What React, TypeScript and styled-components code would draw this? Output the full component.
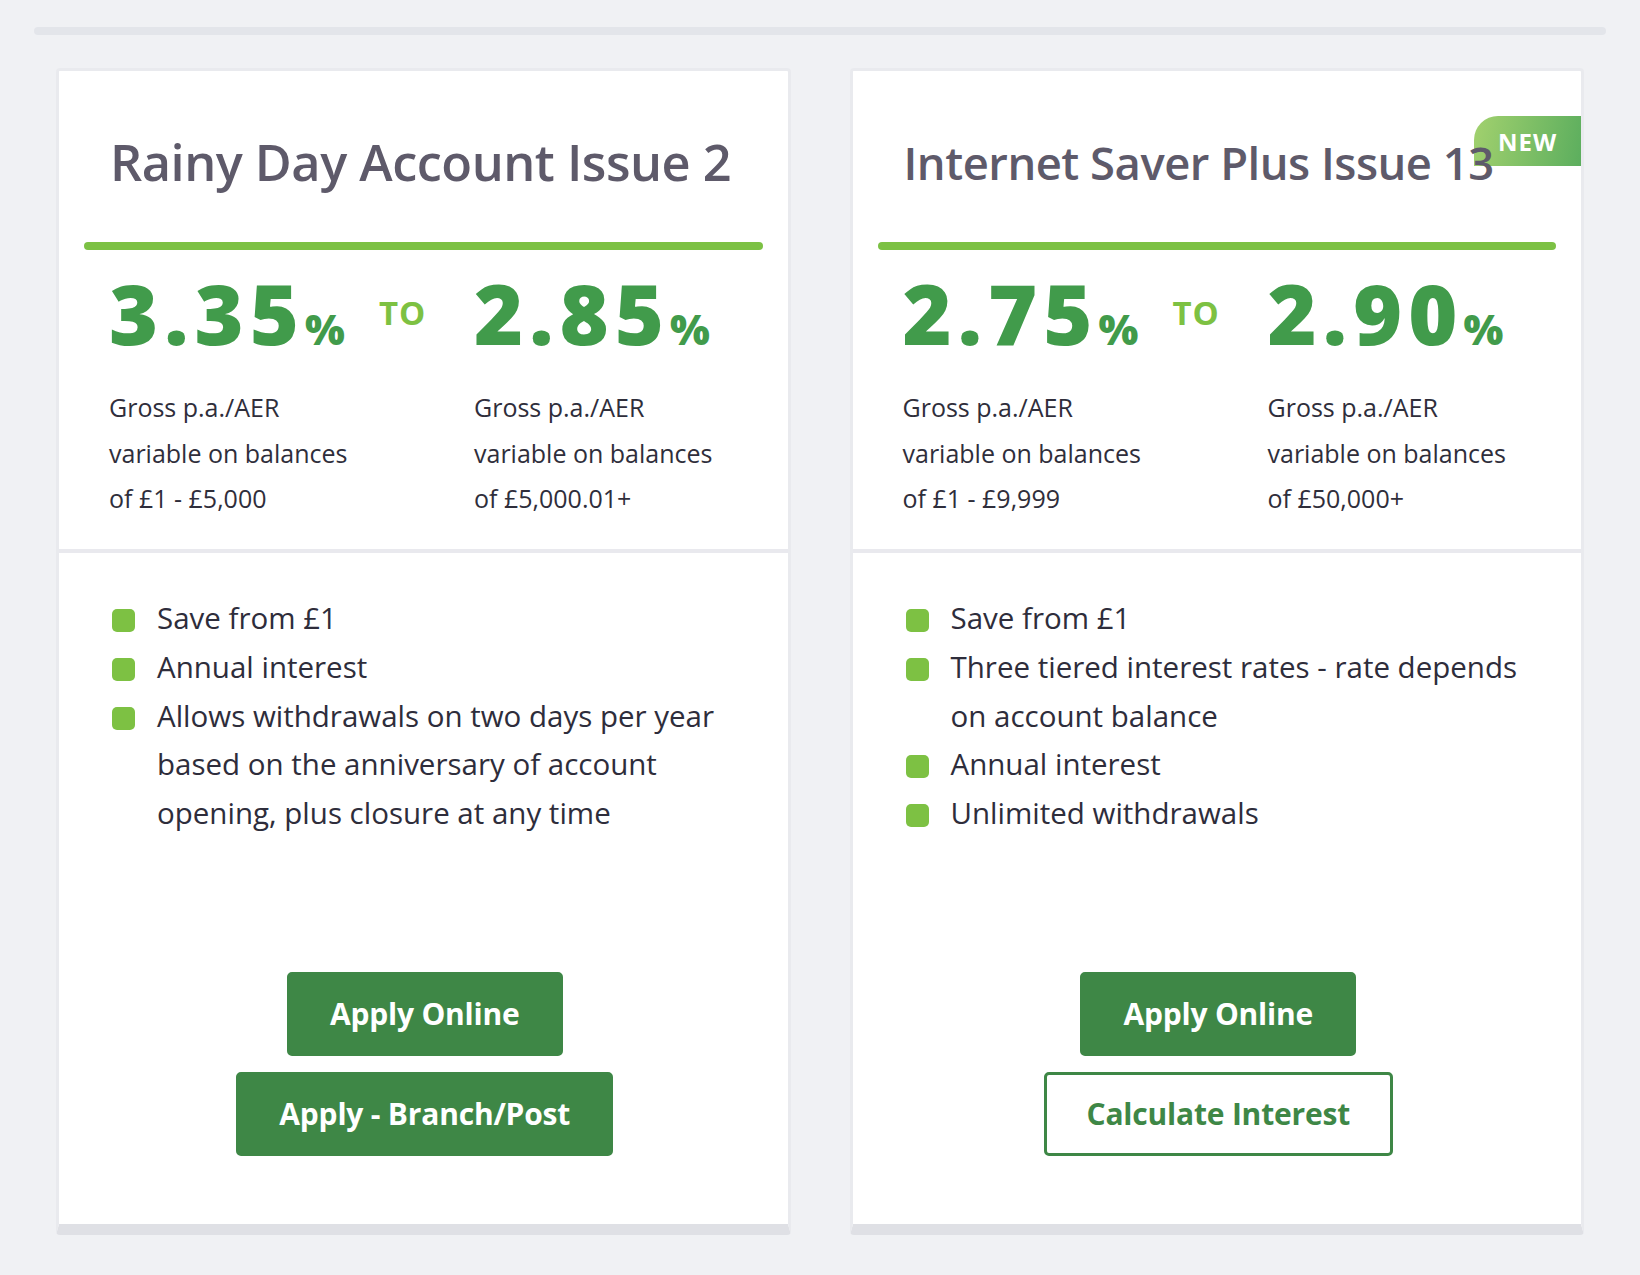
import * as React from "react";
import styled, { createGlobalStyle } from "styled-components";

interface Rate {
  value: string;
  note: string[];
}

interface Account {
  title: string;
  titleSize: number;
  isNew?: boolean;
  rates: [Rate, Rate];
  features: string[];
  actions: { label: string; outline?: boolean }[];
}

const accounts: Account[] = [
  {
    title: "Rainy Day Account Issue 2",
    titleSize: 50.5,
    rates: [
      { value: "3.35", note: ["Gross p.a./AER", "variable on balances", "of £1 - £5,000"] },
      { value: "2.85", note: ["Gross p.a./AER", "variable on balances", "of £5,000.01+"] },
    ],
    features: [
      "Save from £1",
      "Annual interest",
      "Allows withdrawals on two days per year based on the anniversary of account opening, plus closure at any time",
    ],
    actions: [{ label: "Apply Online" }, { label: "Apply - Branch/Post" }],
  },
  {
    title: "Internet Saver Plus Issue 13",
    titleSize: 45.4,
    isNew: true,
    rates: [
      { value: "2.75", note: ["Gross p.a./AER", "variable on balances", "of £1 - £9,999"] },
      { value: "2.90", note: ["Gross p.a./AER", "variable on balances", "of £50,000+"] },
    ],
    features: [
      "Save from £1",
      "Three tiered interest rates - rate depends on account balance",
      "Annual interest",
      "Unlimited withdrawals",
    ],
    actions: [{ label: "Apply Online" }, { label: "Calculate Interest", outline: true }],
  },
];

const GlobalStyle = createGlobalStyle`
  html, body {
    margin: 0;
    padding: 0;
    background: #f0f1f4;
  }
  body {
    font-family: "Open Sans", "Noto Sans", sans-serif;
    -webkit-font-smoothing: antialiased;
  }
`;

const Page = styled.div`
  padding: 27px 34px 40px;
  box-sizing: border-box;
  min-height: 1275px;
`;

const TopBar = styled.div`
  height: 8px;
  border-radius: 4px;
  background: #e3e5ea;
`;

const CardGrid = styled.div`
  display: grid;
  grid-template-columns: 1fr 1fr;
  gap: 59px;
  margin-top: 33px;
  padding: 0 22px;
`;

const Card = styled.section`
  position: relative;
  display: flex;
  flex-direction: column;
  background: #ffffff;
  border: 3px solid #e9eaee;
  border-bottom: 11px solid #dfe0e5;
  border-radius: 4px;
`;

const Badge = styled.div`
  position: absolute;
  top: 45px;
  right: 0;
  width: 107px;
  height: 50px;
  display: flex;
  align-items: center;
  justify-content: center;
  border-radius: 24px 0 0 0;
  background: linear-gradient(100deg, #a2d16e 0%, #5cae5e 100%);
  color: #ffffff;
  font-size: 24px;
  font-weight: 700;
  letter-spacing: 1px;
  z-index: 0;
`;

const TopSection = styled.div`
  padding: 0 25px 27px;
  border-bottom: 4px solid #e9e9ee;
`;

const Title = styled.h2<{ $size: number }>`
  position: relative;
  z-index: 1;
  height: 58px;
  margin: 0;
  padding: 62px 0 0 26px;
  font-size: ${(p) => p.$size}px;
  line-height: 58px;
  font-weight: 600;
  letter-spacing: -0.5px;
  color: #5e5a6a;
  white-space: nowrap;
`;

const GreenRule = styled.div`
  height: 8px;
  margin-top: 51px;
  border-radius: 4px;
  background: #7cc144;
`;

const RatesRow = styled.div`
  display: grid;
  grid-template-columns: 270px 95px 1fr;
  margin-top: 21px;
  padding-left: 25px;
`;

const RateColumn = styled.div`
  display: flex;
  flex-direction: column;
`;

const RateValue = styled.div`
  font-size: 84px;
  line-height: 84px;
  font-weight: 800;
  letter-spacing: 6px;
  color: #419b4b;
  white-space: nowrap;
`;

const Percent = styled.span`
  font-size: 42px;
  line-height: 42px;
  letter-spacing: 0;
`;

const ToLabel = styled.div`
  margin-top: 25px;
  font-size: 33px;
  line-height: 33px;
  font-weight: 700;
  letter-spacing: 1px;
  color: #7dc142;
`;

const RateNote = styled.p`
  margin: 30px 0 0;
  font-size: 25px;
  line-height: 45.5px;
  color: #2f2e3b;
`;

const BottomSection = styled.div`
  flex: 1;
  display: flex;
  flex-direction: column;
  padding: 41.5px 50px 68px 53px;
`;

const FeatureList = styled.ul`
  flex: 1;
  min-height: 377.5px;
  margin: 0;
  padding: 0;
  list-style: none;
`;

const FeatureItem = styled.li`
  display: flex;
  align-items: flex-start;
  gap: 22px;
  font-size: 29.5px;
  line-height: 48.75px;
  color: #2e2d3b;
`;

const Bullet = styled.span`
  flex: none;
  width: 23px;
  height: 23px;
  margin-top: 15px;
  border-radius: 5px;
  background: #7dc143;
`;

const ButtonGroup = styled.div`
  display: flex;
  flex-direction: column;
  align-items: center;
  gap: 16px;
`;

const Button = styled.a<{ $outline?: boolean }>`
  box-sizing: border-box;
  display: inline-flex;
  align-items: center;
  justify-content: center;
  height: 84px;
  padding: 0 40px;
  border-radius: 5px;
  border: 3px solid #3e8746;
  background: ${(p) => (p.$outline ? "#ffffff" : "#3e8746")};
  color: ${(p) => (p.$outline ? "#3e8746" : "#ffffff")};
  font-size: 30px;
  font-weight: 700;
  letter-spacing: -0.2px;
  text-decoration: none;
  white-space: nowrap;
  cursor: pointer;
`;

function RateBlock({ rate }: { rate: Rate }) {
  return (
    <RateColumn>
      <RateValue>
        {rate.value}
        <Percent>%</Percent>
      </RateValue>
      <RateNote>
        {rate.note.map((line, i) => (
          <React.Fragment key={i}>
            {line}
            {i < rate.note.length - 1 && <br />}
          </React.Fragment>
        ))}
      </RateNote>
    </RateColumn>
  );
}

function AccountCard({ account }: { account: Account }) {
  return (
    <Card>
      {account.isNew && <Badge>NEW</Badge>}
      <TopSection>
        <Title $size={account.titleSize}>{account.title}</Title>
        <GreenRule />
        <RatesRow>
          <RateBlock rate={account.rates[0]} />
          <ToLabel>TO</ToLabel>
          <RateBlock rate={account.rates[1]} />
        </RatesRow>
      </TopSection>
      <BottomSection>
        <FeatureList>
          {account.features.map((f) => (
            <FeatureItem key={f}>
              <Bullet />
              <span>{f}</span>
            </FeatureItem>
          ))}
        </FeatureList>
        <ButtonGroup>
          {account.actions.map((a) => (
            <Button key={a.label} $outline={a.outline}>
              {a.label}
            </Button>
          ))}
        </ButtonGroup>
      </BottomSection>
    </Card>
  );
}

export default function App() {
  return (
    <>
      <GlobalStyle />
      <Page>
        <TopBar />
        <CardGrid>
          {accounts.map((acc) => (
            <AccountCard key={acc.title} account={acc} />
          ))}
        </CardGrid>
      </Page>
    </>
  );
}
